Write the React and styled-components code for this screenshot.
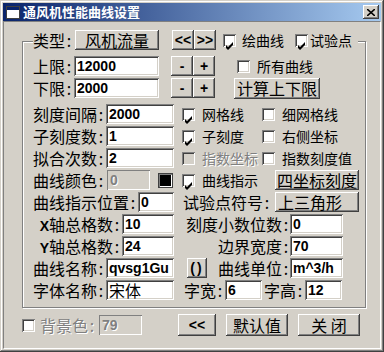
import React from 'react';
import styled, { createGlobalStyle, css } from 'styled-components';

const GlobalStyle = createGlobalStyle`
  html, body {
    margin: 0;
    padding: 0;
    background: #d4d0c8;
  }
  body {
    font-family: "Noto Sans CJK SC", "Liberation Sans", sans-serif;
    font-size: 16px;
    color: #000;
  }
  * {
    box-sizing: border-box;
  }
`;

const raised = css`
  box-shadow: inset -1px -1px #404040, inset 1px 1px #fff, inset -2px -2px #808080, inset 2px 2px #d4d0c8;
`;

const sunken = css`
  box-shadow: inset 1px 1px #808080, inset -1px -1px #fff, inset 2px 2px #404040, inset -2px -2px #d4d0c8;
`;

const disabledText = css`
  color: #808080;
  text-shadow: 1px 1px 0 #fff;
`;

const Window = styled.div`
  width: 384px;
  height: 352px;
  padding: 3px;
  background: #d4d0c8;
  box-shadow: inset -1px -1px #404040, inset 1px 1px #d4d0c8, inset -2px -2px #808080, inset 2px 2px #fff;
  display: flex;
  flex-direction: column;
`;

const TitleBar = styled.div`
  height: 18px;
  flex-shrink: 0;
  display: flex;
  align-items: center;
  gap: 3px;
  padding: 0 2px 0 3px;
  background: linear-gradient(to right, #0a246a, #a6caf0);
  color: #fff;
  font-size: 13px;
  font-weight: 700;
  line-height: 18px;
  white-space: nowrap;
`;

const TitleText = styled.span`
  flex: 1;
`;

const CloseButton = styled.div`
  width: 16px;
  height: 14px;
  background: #d4d0c8;
  ${raised};
  display: flex;
  align-items: center;
  justify-content: center;
`;

const Client = styled.div`
  flex: 1;
  border-top: 1px solid #808080;
  border-left: 1px solid #808080;
  border-right: 1px solid #fff;
  border-bottom: 1px solid #fff;
  padding: 19px 0 0 18px;
  display: flex;
  flex-direction: column;
`;

const Group = styled.div`
  width: 344px;
  border: 1px solid #808080;
  box-shadow: inset 1px 1px #fff, 1px 1px #fff;
  padding: 0 8px 7px 10px;
  display: flex;
  flex-direction: column;
`;

const Legend = styled.div`
  align-self: flex-start;
  height: 20px;
  margin-top: -12px;
  padding-right: 6px;
  background: #d4d0c8;
  display: flex;
  align-items: center;
`;

const Row = styled.div`
  height: 20px;
  margin-top: ${(p) => p.$mt ?? 2}px;
  display: flex;
  align-items: center;
`;

const LeftCell = styled.div`
  width: 141px;
  flex-shrink: 0;
  display: flex;
  align-items: center;
  justify-content: flex-end;
  gap: 1px;
`;

const RightCell = styled.div`
  margin-left: 8px;
  display: flex;
  align-items: center;
`;

const Text = styled.span`
  flex-shrink: 0;
  white-space: nowrap;
  line-height: 18px;
  margin-left: ${(p) => p.$ml ?? 0}px;
  ${(p) => p.$width && `width: ${p.$width}px;`}
  ${(p) => p.$right && 'text-align: right;'}
  ${(p) => p.$small && 'font-size: 14px;'}
  ${(p) => p.$disabled && disabledText};
`;

const Colon = styled.span`
  display: inline-block;
  width: 8px;
  text-align: center;
`;

const Latin = styled.span`
  font-family: "Liberation Sans", sans-serif;
  font-weight: 700;
  font-size: 14px;
  line-height: 1;
`;

const Field = styled.input`
  flex-shrink: 0;
  width: ${(p) => p.$w}px;
  height: 20px;
  margin-left: ${(p) => p.$ml ?? 0}px;
  padding: 0 0 0 3px;
  border: none;
  outline: none;
  background: ${(p) => (p.disabled ? '#d4d0c8' : '#fff')};
  ${sunken};
  font-family: ${(p) => (p.$cjk ? '"Noto Sans CJK SC", sans-serif' : '"Liberation Sans", sans-serif')};
  font-weight: ${(p) => (p.$cjk ? 400 : 700)};
  font-size: ${(p) => (p.$cjk ? 16 : 14)}px;
  color: #000;
  ${(p) => p.disabled && disabledText};
  ${(p) => p.$flat && css`
    box-shadow: inset 1px 1px #808080, inset -1px -1px #fff;
  `}
`;

const Button = styled.div`
  flex-shrink: 0;
  width: ${(p) => p.$w}px;
  height: ${(p) => p.$h ?? 20}px;
  margin-left: ${(p) => p.$ml ?? 0}px;
  padding: ${(p) => (p.$left ? '0 0 0 3px' : '0')};
  background: #d4d0c8;
  ${raised};
  display: flex;
  align-items: center;
  justify-content: ${(p) => (p.$left ? 'flex-start' : 'center')};
  white-space: nowrap;
  font-size: 16px;
  line-height: 18px;
  ${(p) => p.$latin && css`
    font-family: "Liberation Sans", sans-serif;
    font-weight: 700;
    font-size: 14px;
  `}
  letter-spacing: ${(p) => p.$spacing ?? 0}px;
`;

const Swatch = styled.div`
  flex-shrink: 0;
  width: 15px;
  height: 15px;
  margin: 0 1px 0 7px;
  background: #000;
  box-shadow: inset 1px 1px #808080, inset -1px -1px #fff;
  border: 1px solid #404040;
`;

const CheckItem = styled.div`
  flex-shrink: 0;
  display: flex;
  align-items: center;
  margin-left: ${(p) => p.$ml ?? 0}px;
  ${(p) => p.$width && `width: ${p.$width}px;`}
  gap: ${(p) => p.$gap ?? 7}px;
`;

const Box = styled.span`
  flex-shrink: 0;
  width: 13px;
  height: 13px;
  display: block;
  background: ${(p) => (p.$disabled ? '#d4d0c8' : '#fff')};
  ${sunken};
`;

const BottomRow = styled.div`
  height: 22px;
  margin-top: 6px;
  display: flex;
  align-items: center;
`;

function Check({ checked, disabled }) {
  return (
    <Box $disabled={disabled}>
      {checked && (
        <svg width="13" height="13" viewBox="0 0 13 13">
          <polygon points="3,5 5,7 10,2 10,5 5,10 3,8" fill="#000" />
        </svg>
      )}
    </Box>
  );
}

function CheckBox({ label, checked, disabled, textDisabled, width, ml, gap, large }) {
  return (
    <CheckItem $width={width} $ml={ml} $gap={gap}>
      <Check checked={checked} disabled={disabled} />
      <Text $small={!large} $disabled={disabled || textDisabled}>{label}</Text>
    </CheckItem>
  );
}

function Label({ children, ...rest }) {
  return (
    <Text {...rest}>
      {children}
      <Colon>:</Colon>
    </Text>
  );
}

function WindowIcon() {
  return (
    <svg width="14" height="13" viewBox="0 0 14 13">
      <rect x="0.5" y="0.5" width="13" height="12" fill="#fff" stroke="#404040" />
      <rect x="1" y="1" width="12" height="3" fill="#0a246a" />
    </svg>
  );
}

export default function App() {
  return (
    <>
      <GlobalStyle />
      <Window>
        <TitleBar>
          <WindowIcon />
          <TitleText>通风机性能曲线设置</TitleText>
          <CloseButton>
            <svg width="8" height="7" viewBox="0 0 8 7">
              <path d="M0 0 L8 7 M8 0 L0 7" stroke="#000" strokeWidth="1.6" />
            </svg>
          </CloseButton>
        </TitleBar>
        <Client>
          <Group>
            <Legend>
              <Label>类型</Label>
              <Button $w={84} $ml={2}>风机流量</Button>
              <Button $w={22} $ml={13} $latin>&lt;&lt;</Button>
              <Button $w={22} $latin>&gt;&gt;</Button>
              <CheckBox label="绘曲线" checked ml={7} gap={6} />
              <CheckBox label="试验点" checked ml={11} gap={2} />
            </Legend>

            <Row $mt={6}>
              <Label>上限</Label>
              <Field $w={85} $ml={1} defaultValue="12000" readOnly />
              <Button $w={22} $ml={12} $latin>-</Button>
              <Button $w={22} $latin>+</Button>
              <CheckBox label="所有曲线" ml={22} />
            </Row>
            <Row>
              <Label>下限</Label>
              <Field $w={85} $ml={1} defaultValue="2000" readOnly />
              <Button $w={22} $ml={12} $latin>-</Button>
              <Button $w={22} $latin>+</Button>
              <Button $w={86} $h={21} $ml={19}>计算上下限</Button>
            </Row>

            <Row $mt={6}>
              <LeftCell>
                <Label>刻度间隔</Label>
                <Field $w={68} defaultValue="2000" readOnly />
              </LeftCell>
              <RightCell>
                <CheckBox label="网格线" checked width={80} />
                <CheckBox label="细网格线" />
              </RightCell>
            </Row>
            <Row>
              <LeftCell>
                <Label>子刻度数</Label>
                <Field $w={68} defaultValue="1" readOnly />
              </LeftCell>
              <RightCell>
                <CheckBox label="子刻度" checked width={80} />
                <CheckBox label="右侧坐标" />
              </RightCell>
            </Row>
            <Row>
              <LeftCell>
                <Label>拟合次数</Label>
                <Field $w={68} defaultValue="2" readOnly />
              </LeftCell>
              <RightCell>
                <CheckBox label="指数坐标" disabled width={80} />
                <CheckBox label="指数刻度值" />
              </RightCell>
            </Row>
            <Row>
              <LeftCell>
                <Label>曲线颜色</Label>
                <Field $w={43} $ml={1} defaultValue="0" disabled $flat />
                <Swatch />
              </LeftCell>
              <RightCell>
                <CheckBox label="曲线指示" checked width={93} />
                <Button $w={84}>四坐标刻度</Button>
              </RightCell>
            </Row>
            <Row>
              <LeftCell>
                <Label>曲线指示位置</Label>
                <Field $w={36} defaultValue="0" readOnly />
              </LeftCell>
              <RightCell>
                <Label $width={92} $ml={1}>试验点符号</Label>
                <Button $w={84} $left>上三角形</Button>
              </RightCell>
            </Row>
            <Row>
              <LeftCell>
                <Label><Latin>X</Latin>轴总格数</Label>
                <Field $w={52} defaultValue="10" readOnly />
              </LeftCell>
              <RightCell>
                <Label $width={108} $right>刻度小数位数</Label>
                <Field $w={53} defaultValue="0" readOnly />
              </RightCell>
            </Row>
            <Row>
              <LeftCell>
                <Label><Latin>Y</Latin>轴总格数</Label>
                <Field $w={52} defaultValue="24" readOnly />
              </LeftCell>
              <RightCell>
                <Label $width={108} $right>边界宽度</Label>
                <Field $w={53} defaultValue="70" readOnly />
              </RightCell>
            </Row>
            <Row>
              <LeftCell>
                <Label>曲线名称</Label>
                <Field $w={68} defaultValue="qvsg1Gu" readOnly />
              </LeftCell>
              <RightCell>
                <Button $w={20} $ml={5} $latin $spacing={2}>()</Button>
                <Label $width={83} $right>曲线单位</Label>
                <Field $w={53} defaultValue="m^3/h" readOnly />
              </RightCell>
            </Row>
            <Row>
              <LeftCell>
                <Label>字体名称</Label>
                <Field $w={68} defaultValue="宋体" $cjk readOnly />
              </LeftCell>
              <RightCell>
                <Label $ml={2}>字宽</Label>
                <Field $w={37} $ml={1} defaultValue="6" readOnly />
                <Label $ml={2}>字高</Label>
                <Field $w={37} $ml={1} defaultValue="12" readOnly />
              </RightCell>
            </Row>
          </Group>

          <BottomRow>
            <CheckBox label={<>背景色<Colon>:</Colon></>} gap={5} textDisabled large />
            <Field $w={43} $ml={3} defaultValue="79" disabled $flat />
            <Button $w={38} $h={22} $ml={36} $latin>&lt;&lt;</Button>
            <Button $w={62} $h={22} $ml={10}>默认值</Button>
            <Button $w={62} $h={22} $ml={10}>关 闭</Button>
          </BottomRow>
        </Client>
      </Window>
    </>
  );
}
